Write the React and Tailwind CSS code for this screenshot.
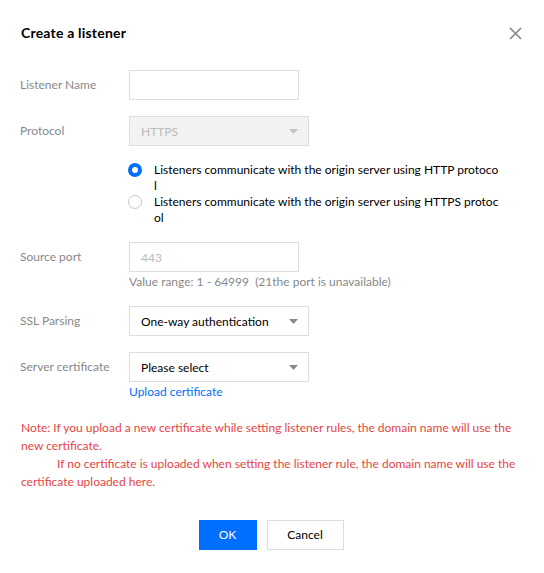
function Caret({ light }) {
  return (
    <svg width="9" height="5" viewBox="0 0 9 5" className="shrink-0">
      <path d="M0 0h9L4.5 5z" fill={light ? '#c4c4c4' : '#888888'} />
    </svg>
  )
}

function Close() {
  return (
    <svg width="13" height="13" viewBox="0 0 13 13" className="shrink-0">
      <path d="M1 1L12 12M12 1L1 12" stroke="#888888" strokeWidth="1.7" />
    </svg>
  )
}

function Row({ label, children }) {
  return (
    <div className="flex">
      <div className="w-[109px] h-[30px] flex items-center text-[#888] shrink-0">{label}</div>
      <div className="flex flex-col">{children}</div>
    </div>
  )
}

function Select({ value, disabled }) {
  return (
    <div
      className={`w-[180px] h-[30px] flex items-center justify-between pl-[11px] pr-[10px] border border-[#dddddd] ${
        disabled ? 'bg-[#f2f2f2] text-[#bbbbbb]' : 'bg-white text-black'
      }`}
    >
      <span className="pt-[2px]">{value}</span>
      <Caret light={disabled} />
    </div>
  )
}

function Radio({ checked, lines }) {
  return (
    <div className="flex items-start">
      <span
        className={`mt-[1px] w-[14px] h-[14px] rounded-full shrink-0 bg-white ${
          checked ? 'border-[4px] border-[#006eff]' : 'border border-[#c8c8c8]'
        }`}
      />
      <div className="ml-[12px] leading-[16px] text-black whitespace-nowrap">
        {lines.map((l, i) => (
          <div key={i}>{l}</div>
        ))}
      </div>
    </div>
  )
}

export default function App() {
  return (
    <div className="w-[544px] h-[573px] bg-white text-[12px] font-['Lato','Liberation_Sans',sans-serif] overflow-hidden">
      <div className="flex items-center justify-between pl-[21px] pr-[22px] pt-[24px]">
        <h2 className="text-[14px] leading-[18px] font-bold text-black tracking-[0.2px]">Create a listener</h2>
        <Close />
      </div>

      <div className="pl-[20px] pt-[28px] flex flex-col">
        <Row label="Listener Name">
          <div className="w-[170px] h-[30px] border border-[#dddddd]" />
        </Row>

        <div className="mt-[16px]">
          <Row label="Protocol">
            <Select value="HTTPS" disabled />
          </Row>
        </div>

        <div className="mt-[16px] ml-[108px] flex flex-col">
          <Radio checked lines={['Listeners communicate with the origin server using HTTP protoco', 'l']} />
          <Radio lines={['Listeners communicate with the origin server using HTTPS protoc', 'ol']} />
        </div>

        <div className="mt-[16px]">
          <Row label="Source port">
            <div className="w-[170px] h-[30px] border border-[#dddddd] flex items-center pl-[11px] pt-[1px] text-[#bbbbbb]">443</div>
            <div className="mt-[2px] leading-[16px] text-[#888] whitespace-pre">
              Value range: 1 - 64999  (21the port is unavailable)
            </div>
          </Row>
        </div>

        <div className="mt-[16px]">
          <Row label="SSL Parsing">
            <Select value="One-way authentication" />
          </Row>
        </div>

        <div className="mt-[16px]">
          <Row label="Server certificate">
            <Select value="Please select" />
            <a className="mt-[2px] leading-[16px] text-[#006eff]">Upload certificate</a>
          </Row>
        </div>

        <div className="mt-[19px] pl-[1px] leading-[18px] text-[#e54545] whitespace-nowrap">
          <div>Note: If you upload a new certificate while setting listener rules, the domain name will use the</div>
          <div>new certificate.</div>
          <div className="pl-[36px]">If no certificate is uploaded when setting the listener rule, the domain name will use the</div>
          <div>certificate uploaded here.</div>
        </div>
      </div>

      <div className="mt-[29px] flex justify-center gap-[10px] pr-[2px]">
        <button className="w-[58px] h-[30px] bg-[#006eff] text-white">OK</button>
        <button className="w-[77px] h-[30px] border border-[#dddddd] bg-white text-black">Cancel</button>
      </div>
    </div>
  )
}
